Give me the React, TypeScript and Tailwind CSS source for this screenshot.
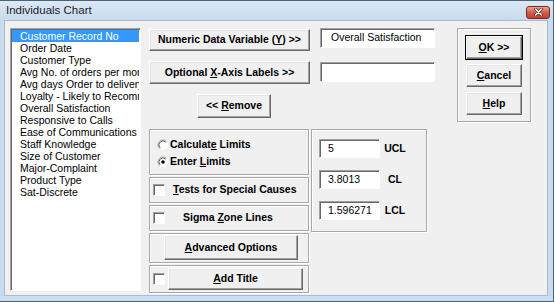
import React from 'react';

const raised =
  'bg-[#f0f0f0] border border-t-white border-l-white border-r-[#696969] border-b-[#696969] shadow-[inset_-1px_-1px_0_#a0a0a0,inset_1px_1px_0_#e3e3e3]';
const sunken =
  'bg-white border border-t-[#a0a0a0] border-l-[#a0a0a0] border-r-white border-b-white shadow-[inset_1px_1px_0_#696969]';
const group = 'border border-[#a8a8a8] shadow-[inset_1px_1px_0_#fff,1px_1px_0_#fff]';

const fields = [
  'Customer Record No',
  'Order Date',
  'Customer Type',
  'Avg No. of orders per month',
  'Avg days Order to delivery',
  'Loyalty - Likely to Recommend',
  'Overall Satisfaction',
  'Responsive to Calls',
  'Ease of Communications',
  'Staff Knowledge',
  'Size of Customer',
  'Major-Complaint',
  'Product Type',
  'Sat-Discrete',
];

function Btn({ className = '', children }: { className?: string; children: React.ReactNode }) {
  return (
    <div className={`${raised} flex items-center justify-center font-bold text-[10.5px] whitespace-pre ${className}`}>
      <span>{children}</span>
    </div>
  );
}

function Check() {
  return <div className={`w-[12px] h-[12px] shrink-0 ${sunken}`} />;
}

function Radio({ checked }: { checked?: boolean }) {
  return (
    <svg width="12" height="12" viewBox="0 0 12 12" className="shrink-0">
      <circle cx="6" cy="6" r="5" fill="#fff" />
      <path d="M2.46 9.54 A5 5 0 0 1 9.54 2.46" fill="none" stroke="#a0a0a0" strokeWidth="1" />
      <path d="M3.17 8.83 A4 4 0 0 1 8.83 3.17" fill="none" stroke="#696969" strokeWidth="1" />
      {checked && <circle cx="6" cy="6" r="1.8" fill="#000" />}
    </svg>
  );
}

function Field({ value, className = '' }: { value?: string; className?: string }) {
  return (
    <div className={`${sunken} flex items-center text-[10.5px] whitespace-nowrap ${className}`}>{value}</div>
  );
}

export default function App() {
  return (
    <div className="w-[554px] h-[302px] flex flex-col bg-[#c9dcef] border-t border-r border-b border-[#4b6576] font-['Liberation_Sans',Arial,sans-serif] text-black select-none">
      {/* title bar */}
      <div className="h-[19px] flex items-center justify-between pl-[6px] pr-[3px] bg-gradient-to-b from-[#dde9f5] to-[#c6d9ee]">
        <span className="text-[11.5px] text-[#1e1e1e]">Individuals Chart</span>
        <div className="w-[24px] h-[13px] mt-[3px] rounded-[3px] border border-[#7a2a22] bg-gradient-to-b from-[#e8a596] via-[#d0604e] to-[#c2402f] flex items-center justify-center">
          <svg width="9" height="8" viewBox="0 0 9 8">
            <path d="M1.5 1 L7.5 7 M7.5 1 L1.5 7" stroke="#5a1a14" strokeWidth="3" strokeLinecap="round" />
            <path d="M1.5 1 L7.5 7 M7.5 1 L1.5 7" stroke="#fff" strokeWidth="1.6" strokeLinecap="round" />
          </svg>
        </div>
      </div>

      {/* client */}
      <div className="flex-1 ml-[4px] mr-[5px] mb-[5px] bg-[#f0f0f0] flex pt-[7px] pl-[5px] border border-[#a9bccd]">
        {/* list box */}
        <div className={`w-[131px] h-[263px] ${sunken} p-[1px] overflow-hidden text-[10.5px]`}>
          {fields.map((f, i) => (
            <div
              key={f}
              className={`h-[12px] leading-[12px] pl-[8px] whitespace-nowrap overflow-hidden ${
                i === 0 ? 'bg-[#3399ff] text-white' : ''
              }`}
            >
              {f}
            </div>
          ))}
        </div>

        {/* middle */}
        <div className="ml-[8px] w-[286px] flex flex-col">
          <div className="h-[101px] flex">
            <div className="w-[161px] flex flex-col">
              <Btn className="mt-[1px] h-[22px]">
                Numeric Data Variable (<span className="underline">Y</span>) &gt;&gt;
              </Btn>
              <Btn className="mt-[10px] h-[23px]">
                Optional <span className="underline">X</span>-Axis Labels &gt;&gt;
              </Btn>
              <Btn className="mt-[10px] h-[24px] w-[74px] ml-[48px]">
                &lt;&lt; <span className="underline">R</span>emove
              </Btn>
            </div>
            <div className="ml-[10px] w-[115px] flex flex-col">
              <Field className="h-[20px] pl-[10px]" value="Overall Satisfaction" />
              <Field className="mt-[14px] h-[20px]" />
            </div>
          </div>

          <div className="flex">
            <div className="w-[160px] flex flex-col gap-[2px] text-[10.5px] font-bold">
              <div className={`${group} h-[46px] pt-[6px] pl-[7px]`}>
                <div className="h-[17px] flex items-center gap-[1px]">
                  <Radio />
                  <span>
                    Calculat<span className="underline">e</span> Limits
                  </span>
                </div>
                <div className="h-[17px] flex items-center gap-[1px]">
                  <Radio checked />
                  <span>
                    Enter <span className="underline">L</span>imits
                  </span>
                </div>
              </div>
              <div className={`${group} h-[26px] pl-[3px] flex items-center`}>
                <Check />
                <span className="ml-[8px]">
                  <span className="underline">T</span>ests for Special Causes
                </span>
              </div>
              <div className={`${group} h-[26px] pl-[3px] flex items-center`}>
                <Check />
                <span className="ml-[18px]">
                  Sigma <span className="underline">Z</span>one Lines
                </span>
              </div>
              <div className={`${group} h-[30px] pl-[14px] pt-[1px]`}>
                <Btn className="w-[134px] h-[25px]">
                  <span className="underline">A</span>dvanced Options
                </Btn>
              </div>
              <div className={`${group} h-[28px] pl-[3px] flex items-center`}>
                <Check />
                <Btn className="ml-[3px] w-[135px] h-[22px]">
                  <span className="underline">A</span>dd Title
                </Btn>
              </div>
            </div>

            <div className={`${group} ml-[2px] w-[116px] h-[103px] pt-[9px] pl-[7px] flex flex-col gap-[12px]`}>
              {[
                ['5', 'UCL'],
                ['3.8013', 'CL'],
                ['1.596271', 'LCL'],
              ].map(([v, l]) => (
                <div key={l} className="flex items-center">
                  <Field className="w-[61px] h-[19px] pl-[8px]" value={v} />
                  <span className="ml-[3px] w-[24px] text-center text-[10.5px] font-bold">{l}</span>
                </div>
              ))}
            </div>
          </div>
        </div>

        {/* right buttons */}
        <div className={`${group} ml-[22px] w-[74px] h-[94px] pt-[7px] pl-[8px] flex flex-col gap-[5px]`}>
          <Btn className="w-[56px] h-[23px] outline outline-1 outline-black">
            <span className="underline">O</span>K &gt;&gt;
          </Btn>
          <Btn className="w-[56px] h-[23px]">
            <span className="underline">C</span>ancel
          </Btn>
          <Btn className="w-[56px] h-[23px]">
            <span className="underline">H</span>elp
          </Btn>
        </div>
      </div>
    </div>
  );
}
